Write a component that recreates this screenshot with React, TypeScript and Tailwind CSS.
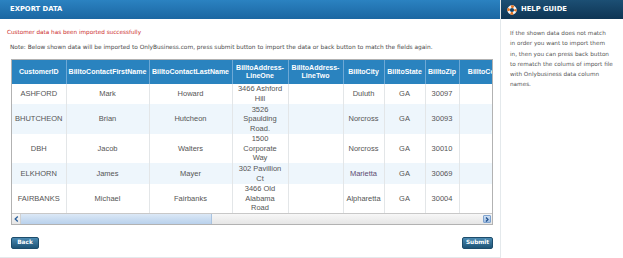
import React from "react";

const cols: { w: number; label: string[] }[] = [
  { w: 54, label: ["CustomerID"] },
  { w: 83, label: ["BilltoContactFirstName"] },
  { w: 83, label: ["BilltoContactLastName"] },
  { w: 56, label: ["BilltoAddress-", "LineOne"] },
  { w: 55, label: ["BilltoAddress-", "LineTwo"] },
  { w: 41, label: ["BilltoCity"] },
  { w: 41, label: ["BilltoState"] },
  { w: 34, label: ["BilltoZip"] },
  { w: 62, label: ["BilltoCountry"] },
];

const rows: { h: string; bg: string; cells: string[][] }[] = [
  { h: "h-[20px]", bg: "bg-white", cells: [["ASHFORD"], ["Mark"], ["Howard"], ["3466 Ashford", "Hill"], [""], ["Duluth"], ["GA"], ["30097"], [""]] },
  { h: "h-[30px]", bg: "bg-[#eef6fc]", cells: [["BHUTCHEON"], ["Brian"], ["Hutcheon"], ["3526", "Spaulding", "Road."], [""], ["Norcross"], ["GA"], ["30093"], [""]] },
  { h: "h-[29px]", bg: "bg-white", cells: [["DBH"], ["Jacob"], ["Walters"], ["1500", "Corporate", "Way"], [""], ["Norcross"], ["GA"], ["30010"], [""]] },
  { h: "h-[21px]", bg: "bg-[#eef6fc]", cells: [["ELKHORN"], ["James"], ["Mayer"], ["302 Pavillion", "Ct"], [""], ["Marietta"], ["GA"], ["30069"], [""]] },
  { h: "h-[29px]", bg: "bg-white", cells: [["FAIRBANKS"], ["Michael"], ["Fairbanks"], ["3466 Old", "Alabama", "Road"], [""], ["Alpharetta"], ["GA"], ["30004"], [""]] },
];

const helpLines = [
  "If the shown data does not match",
  "in order you want to import them",
  "in, then you can press back button",
  "to rematch the colums of import file",
  "with Onlybusiness data column",
  "names.",
];

function Lifebuoy() {
  return (
    <svg width="10" height="10" viewBox="0 0 10 10">
      <circle cx="5" cy="5" r="3.4" fill="none" stroke="#f4f4f4" strokeWidth="2.6" />
      <circle
        cx="5"
        cy="5"
        r="3.4"
        fill="none"
        stroke="#e8731e"
        strokeWidth="2.6"
        strokeDasharray="2.67 2.67"
        strokeDashoffset="1.3"
      />
    </svg>
  );
}

function Btn({ children }: { children: React.ReactNode }) {
  return (
    <div className="h-[12px] px-[5px] flex items-center justify-center rounded-[2px] border border-[#1d4c6b] bg-gradient-to-b from-[#4b8ab2] to-[#1e5476] text-white font-bold text-[5.8px] leading-none [font-family:'DejaVu_Sans',sans-serif]">
      {children}
    </div>
  );
}

export default function App() {
  const total = cols.reduce((a, c) => a + c.w, 0);
  return (
    <div className="w-[623px] h-[258px] bg-white flex overflow-hidden [font-family:'DejaVu_Sans',sans-serif]">
      {/* Left panel */}
      <div className="w-[501px] h-[258px] border-r border-b border-[#e4e9ec] flex flex-col">
        <div className="h-[19px] shrink-0 bg-gradient-to-b from-[#2b82c1] to-[#1b67a2] flex items-center pl-[10px]">
          <span className="text-white font-bold text-[6.8px] leading-none">EXPORT DATA</span>
        </div>
        <div className="pl-[7px] mt-[10px] text-[5.7px] leading-[6px] text-[#cc2b2b] whitespace-nowrap">
          Customer data has been imported successfully
        </div>
        <div className="pl-[10px] mt-[9px] text-[5.85px] leading-[6px] text-[#4a4a4a] whitespace-nowrap">
          Note: Below shown data will be imported to OnlyBusiness.com, press submit button to import the data or back button to match the fields again.
        </div>
        <div className="ml-[11px] mt-[9px] w-[482px] border border-[#b2b2b2] overflow-hidden">
          <div className="overflow-hidden">
            <table
              className="table-fixed border-collapse [font-family:'Liberation_Sans',Arial,sans-serif]"
              style={{ width: total }}
            >
              <colgroup>
                {cols.map((c, i) => (
                  <col key={i} style={{ width: c.w }} />
                ))}
              </colgroup>
              <thead>
                <tr className="h-[24px] bg-[#2a83bf]">
                  {cols.map((c, i) => (
                    <th
                      key={i}
                      className="border-r border-[#6ea9d6] text-white font-bold text-[7px] leading-[8.5px] text-center align-middle p-0 whitespace-nowrap overflow-hidden"
                    >
                      {c.label.map((l, j) => (
                        <div key={j}>{l}</div>
                      ))}
                    </th>
                  ))}
                </tr>
              </thead>
              <tbody>
                {rows.map((r, ri) => (
                  <tr key={ri} className={`${r.h} ${r.bg}`}>
                    {r.cells.map((cell, ci) => (
                      <td
                        key={ci}
                        className={`border-r border-[#e3e6e8] text-center align-middle p-0 text-[7.5px] leading-[9.6px] whitespace-nowrap ${
                          cell[0] === "Marietta" ? "text-[#5d4b72]" : "text-[#555]"
                        }`}
                      >
                        {cell.map((l, j) => (
                          <div key={j}>{l}</div>
                        ))}
                      </td>
                    ))}
                  </tr>
                ))}
              </tbody>
            </table>
          </div>
          {/* fake scrollbar */}
          <div className="h-[11px] flex border-t border-[#c8c8c8] bg-gradient-to-b from-[#f7f7f7] to-[#e6e6e6]">
            <div className="w-[9px] h-full flex items-center justify-center border-r border-[#d0d0d0]">
              <svg width="5" height="6" viewBox="0 0 5 6">
                <path d="M3.8 0.6 L1.2 3 L3.8 5.4" fill="none" stroke="#2a5f9a" strokeWidth="1.3" />
              </svg>
            </div>
            <div className="w-[191px] h-full bg-gradient-to-b from-[#dbe8f6] to-[#b9d1ec] border-r border-[#a9c3e0]"></div>
            <div className="flex-1"></div>
            <div className="w-[10px] h-full flex items-center justify-center">
              <div className="w-[8px] h-[8px] rounded-[1px] bg-gradient-to-b from-[#cfe0f3] to-[#9fbde2] border border-[#7fa3cf] flex items-center justify-center">
                <svg width="4" height="5" viewBox="0 0 4 5">
                  <path d="M1 0.5 L3 2.5 L1 4.5" fill="none" stroke="#1f4f8a" strokeWidth="1.2" />
                </svg>
              </div>
            </div>
          </div>
        </div>
        <div className="flex justify-between pl-[11px] pr-[7px] mt-[12px]">
          <div className="w-[28px]">
            <Btn>Back</Btn>
          </div>
          <div className="w-[31px]">
            <Btn>Submit</Btn>
          </div>
        </div>
      </div>
      {/* Help panel */}
      <div className="flex-1 h-[258px] flex flex-col">
        <div className="h-[19px] shrink-0 bg-gradient-to-b from-[#1c4f74] to-[#0e3554] flex items-center pl-[6px] gap-[4px]">
          <Lifebuoy />
          <span className="text-white font-bold text-[6.8px] leading-none">HELP GUIDE</span>
        </div>
        <div className="pl-[9px] pt-[9px] text-[5.7px] leading-[10.3px] text-[#555] whitespace-nowrap">
          {helpLines.map((l, i) => (
            <div key={i}>{l}</div>
          ))}
        </div>
      </div>
    </div>
  );
}
